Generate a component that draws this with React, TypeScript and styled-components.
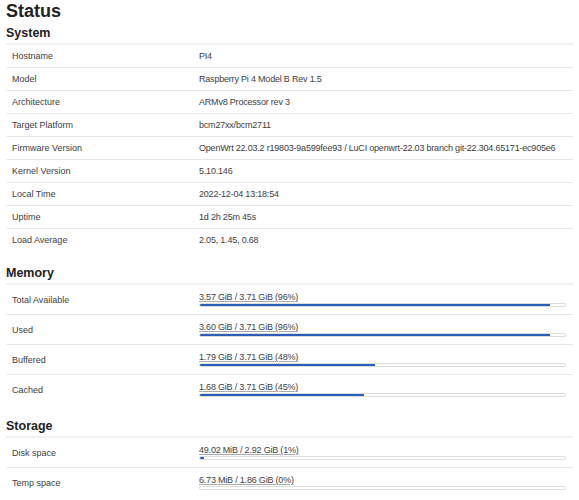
import styled, { createGlobalStyle } from "styled-components";

const GlobalStyle = createGlobalStyle`
    body {
        margin: 0;
        background: #fff;
        font-family: "Liberation Sans", Arial, sans-serif;
        color: #404040;
    }
`;

interface IProgress {
    text: string;
    percent: number;
}

interface IRow {
    label: string;
    value?: string;
    progress?: IProgress;
}

const systemRows: IRow[] = [
    { label: "Hostname", value: "PI4" },
    { label: "Model", value: "Raspberry Pi 4 Model B Rev 1.5" },
    { label: "Architecture", value: "ARMv8 Processor rev 3" },
    { label: "Target Platform", value: "bcm27xx/bcm2711" },
    {
        label: "Firmware Version",
        value: "OpenWrt 22.03.2 r19803-9a599fee93 / LuCI openwrt-22.03 branch git-22.304.65171-ec905e6",
    },
    { label: "Kernel Version", value: "5.10.146" },
    { label: "Local Time", value: "2022-12-04 13:18:54" },
    { label: "Uptime", value: "1d 2h 25m 45s" },
    { label: "Load Average", value: "2.05, 1.45, 0.68" },
];

const memoryRows: IRow[] = [
    { label: "Total Available", progress: { text: "3.57 GiB / 3.71 GiB (96%)", percent: 96 } },
    { label: "Used", progress: { text: "3.60 GiB / 3.71 GiB (96%)", percent: 96 } },
    { label: "Buffered", progress: { text: "1.79 GiB / 3.71 GiB (48%)", percent: 48 } },
    { label: "Cached", progress: { text: "1.68 GiB / 3.71 GiB (45%)", percent: 45 } },
];

const storageRows: IRow[] = [
    { label: "Disk space", progress: { text: "49.02 MiB / 2.92 GiB (1%)", percent: 1 } },
    { label: "Temp space", progress: { text: "6.73 MiB / 1.86 GiB (0%)", percent: 0 } },
];

const Section: React.FC<{ title: string; rows: IRow[]; tall?: boolean }> = (props) => {
    return (
        <SectionWrapper>
            <SectionTitle>{props.title}</SectionTitle>
            <Table>
                {props.rows.map((row, i) => (
                    <Row key={i} $tall={props.tall}>
                        <Label>{row.label}</Label>
                        {row.progress ? (
                            <Value>
                                <BarText>{row.progress.text}</BarText>
                                <Bar>
                                    <BarFill style={{ width: `${row.progress.percent}%` }} />
                                </Bar>
                            </Value>
                        ) : (
                            <Value>{row.value}</Value>
                        )}
                    </Row>
                ))}
            </Table>
        </SectionWrapper>
    );
};

const App: React.FC = () => {
    return (
        <Page>
            <GlobalStyle />
            <PageTitle>Status</PageTitle>
            <Section title="System" rows={systemRows} />
            <Section title="Memory" rows={memoryRows} tall />
            <Section title="Storage" rows={storageRows} tall />
        </Page>
    );
};

const Page = styled.div`
    padding: 0 6px;
`;

const PageTitle = styled.h2`
    margin: 0;
    padding-top: 1px;
    font-size: 18px;
    line-height: 20px;
    font-weight: 700;
    color: #222;
`;

const SectionWrapper = styled.div`
    margin-bottom: 13px;
`;

const SectionTitle = styled.h3`
    margin: 3px 0 0 0;
    font-size: 12.5px;
    line-height: 18px;
    font-weight: 700;
    color: #222;
    padding-bottom: 1px;
`;

const Table = styled.div`
    width: 567px;
    border-top: 2px solid #f0f0f0;
`;

const Row = styled.div<{ $tall?: boolean }>`
    display: grid;
    grid-template-columns: 193px 1fr;
    align-items: center;
    height: ${(p) => (p.$tall ? "29px" : "22px")};
    border-bottom: 1px solid #e8e8e8;
    font-size: 9px;
    &:last-child {
        border-bottom: none;
    }
`;

const Label = styled.div`
    padding-left: 6px;
    color: #404040;
`;

const Value = styled.div`
    color: #404040;
    white-space: nowrap;
    padding-right: 7px;
    letter-spacing: -0.2px;
`;

const BarText = styled.div`
    line-height: 10px;
    text-decoration: underline;
    text-decoration-color: #aaa;
`;

const Bar = styled.div`
    margin-top: 1px;
    height: 4px;
    border: 1px solid #ddd;
    border-radius: 2px;
    background: #fff;
    overflow: hidden;
    box-sizing: border-box;
`;

const BarFill = styled.div`
    height: 100%;
    background: #2a5db8;
`;

export default App;
